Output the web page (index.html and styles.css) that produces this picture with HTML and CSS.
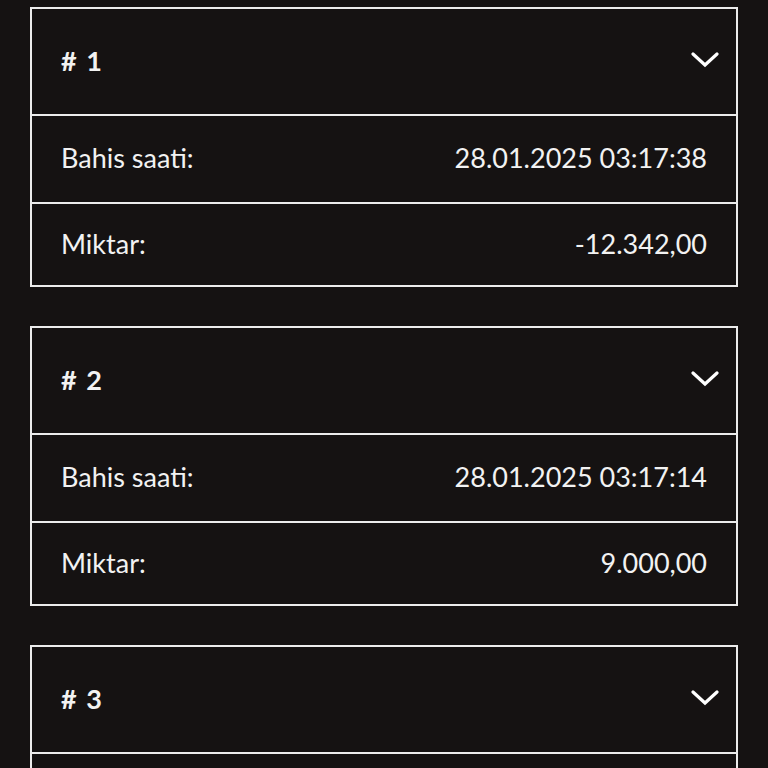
FILE: index.html
```html
<!DOCTYPE html>
<html lang="tr">
<head>
<meta charset="utf-8">
<link rel="stylesheet" href="styles.css">
</head>
<body>
<div class="list">
  <div class="card">
    <div class="head"><span class="num"># 1</span>
      <svg class="chev" viewBox="0 0 28 16"><path d="M2 2 L14 13 L26 2" /></svg></div>
    <div class="row"><span>Bahis saati:</span><span>28.01.2025 03:17:38</span></div>
    <div class="row last"><span>Miktar:</span><span>-12.342,00</span></div>
  </div>
  <div class="card">
    <div class="head"><span class="num"># 2</span>
      <svg class="chev" viewBox="0 0 28 16"><path d="M2 2 L14 13 L26 2" /></svg></div>
    <div class="row"><span>Bahis saati:</span><span>28.01.2025 03:17:14</span></div>
    <div class="row last"><span>Miktar:</span><span>9.000,00</span></div>
  </div>
  <div class="card">
    <div class="head"><span class="num"># 3</span>
      <svg class="chev" viewBox="0 0 28 16"><path d="M2 2 L14 13 L26 2" /></svg></div>
    <div class="row"><span>Bahis saati:</span><span>28.01.2025 03:16:52</span></div>
    <div class="row last"><span>Miktar:</span><span>-5.000,00</span></div>
  </div>
</div>
</body>
</html>
```
FILE: styles.css
```css
html, body {
  margin: 0;
  padding: 0;
  background: #151212;
}
body {
  font-family: Lato, "Noto Sans", sans-serif;
  color: #f2f2f2;
}
.list {
  display: flex;
  flex-direction: column;
  gap: 39px;
  padding: 7px 30px 0 30px;
}
.card {
  border: 2px solid #ececec;
}
.head, .row {
  display: flex;
  align-items: center;
  justify-content: space-between;
  padding: 0 29px 3px 29px;
}
.head {
  height: 102px;
  border-bottom: 2px solid #ececec;
}
.num {
  font-weight: 700;
  font-size: 27px;
  word-spacing: 3px;
}
.chev {
  width: 28px;
  height: 16px;
  margin-right: -12px;
  fill: none;
  stroke: #fff;
  stroke-width: 3.2;
  stroke-linecap: round;
  stroke-linejoin: miter;
}
.row {
  height: 83px;
  border-bottom: 2px solid #ececec;
  font-size: 27px;
}
.row.last {
  height: 78px;
  border-bottom: none;
}
```
